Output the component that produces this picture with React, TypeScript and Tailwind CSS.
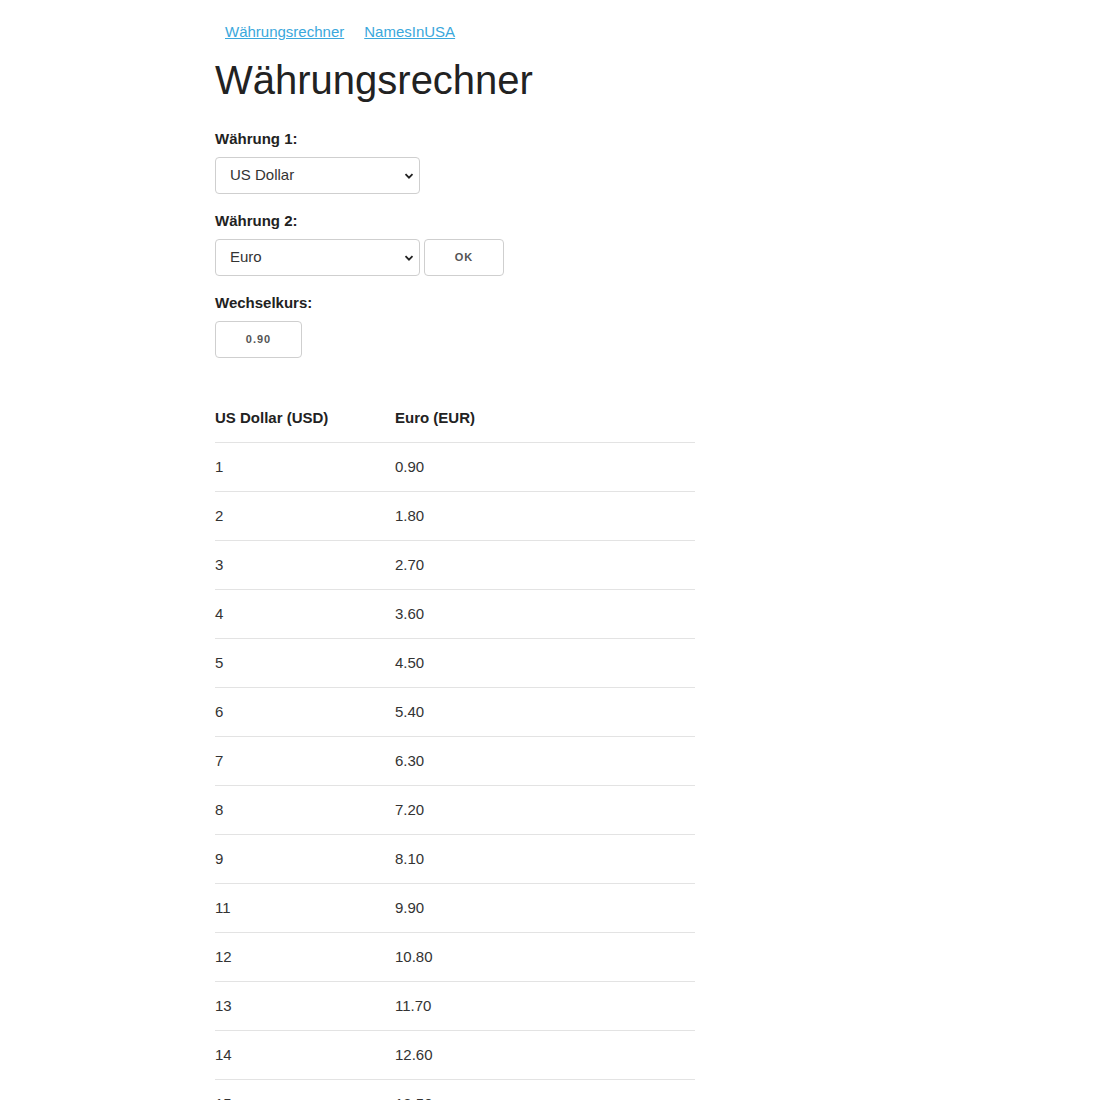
import { useState } from "react";

const currencies = [
  { code: "USD", name: "US Dollar" },
  { code: "EUR", name: "Euro" },
  { code: "GBP", name: "Britisches Pfund" },
  { code: "CHF", name: "Schweizer Franken" },
  { code: "JPY", name: "Japanischer Yen" },
];

// 10 is missing in the original list
const amounts = [1, 2, 3, 4, 5, 6, 7, 8, 9, 11, 12, 13, 14, 15];

function Chevron() {
  return (
    <svg
      className="pointer-events-none absolute right-[6px] top-1/2 -translate-y-1/2"
      width="10"
      height="10"
      viewBox="0 0 10 10"
    >
      <path d="M1.5 3.2 L5 6.7 L8.5 3.2" fill="none" stroke="#222" strokeWidth="1.8" />
    </svg>
  );
}

function CurrencySelect({ value, onChange }: { value: string; onChange: (v: string) => void }) {
  return (
    <div className="relative w-[205px]">
      <select
        value={value}
        onChange={(e) => onChange(e.target.value)}
        className="h-[37px] w-full appearance-none rounded-[4px] border border-[#cfcfcf] bg-white pl-[14px] pr-6 text-[15px] text-[#333] outline-none"
      >
        {currencies.map((c) => (
          <option key={c.code} value={c.code}>
            {c.name}
          </option>
        ))}
      </select>
      <Chevron />
    </div>
  );
}

export default function App() {
  const [from, setFrom] = useState("USD");
  const [to, setTo] = useState("EUR");
  const rate = 0.9;

  const fromName = currencies.find((c) => c.code === from)?.name;
  const toName = currencies.find((c) => c.code === to)?.name;

  return (
    <div className="min-h-[1100px] bg-white font-['Liberation_Sans',Arial,sans-serif] text-[#333]">
      <div className="ml-[215px] w-[480px] pt-[22px]">
        {/* nav */}
        <nav className="flex text-[15px] leading-5">
          <a href="#" className="px-[10px] text-[#3aa8dc] underline">
            Währungsrechner
          </a>
          <a href="#" className="px-[10px] text-[#3aa8dc] underline">
            NamesInUSA
          </a>
        </nav>

        <h1 className="mt-[16px] text-[40px] leading-[44px] text-[#222]">Währungsrechner</h1>

        <div className="mt-[27px]">
          <label className="mb-2 block text-[15px] font-bold leading-5 text-[#222]">Währung 1:</label>
          <CurrencySelect value={from} onChange={setFrom} />
        </div>

        <div className="mt-[17px]">
          <label className="mb-2 block text-[15px] font-bold leading-5 text-[#222]">Währung 2:</label>
          <div className="flex gap-1">
            <CurrencySelect value={to} onChange={setTo} />
            <button className="h-[37px] w-[80px] rounded-[4px] border border-[#cfcfcf] bg-white text-[11px] font-semibold tracking-[1px] text-[#555]">
              OK
            </button>
          </div>
        </div>

        <div className="mt-[17px]">
          <label className="mb-2 block text-[15px] font-bold leading-5 text-[#222]">Wechselkurs:</label>
          <div className="flex h-[37px] w-[87px] items-center justify-center rounded-[4px] border border-[#cfcfcf] text-[11px] font-semibold tracking-[1px] text-[#555]">
            {rate.toFixed(2)}
          </div>
        </div>

        {/* table */}
        <div className="mt-[36px] text-[15px]">
          <div className="flex h-[49px] items-center border-b border-[#e3e3e3] font-bold text-[#222]">
            <div className="w-[180px]">
              {fromName} ({from})
            </div>
            <div>
              {toName} ({to})
            </div>
          </div>
          {amounts.map((n) => (
            <div key={n} className="flex h-[49px] items-center border-b border-[#e3e3e3]">
              <div className="w-[180px]">{n}</div>
              <div>{(n * rate).toFixed(2)}</div>
            </div>
          ))}
        </div>
      </div>
    </div>
  );
}
